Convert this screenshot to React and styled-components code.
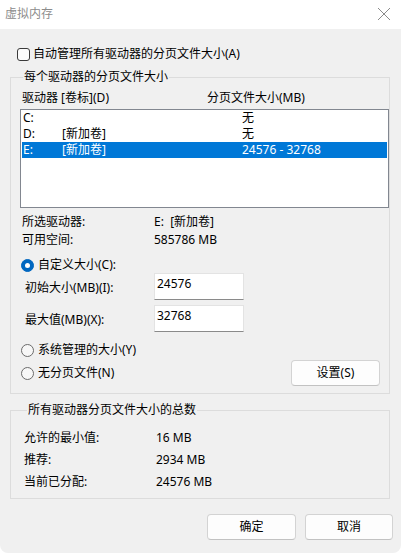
import React from 'react';
import styled, { createGlobalStyle } from 'styled-components';

const GlobalStyle = createGlobalStyle`
  html, body {
    margin: 0;
    padding: 0;
    background: #ffffff;
  }
  body {
    font-family: "Noto Sans", "Noto Sans CJK SC", sans-serif;
    font-size: 12px;
    color: #000;
  }
`;

const Window = styled.div`
  width: 401px;
  height: 553px;
  display: flex;
  flex-direction: column;
  background: #f0f0f0;
  border-radius: 0 0 8px 8px;
  overflow: hidden;
`;

const TitleBar = styled.div`
  height: 29px;
  flex: none;
  background: #ffffff;
  display: flex;
  align-items: center;
  justify-content: space-between;
  padding: 0 9px 0 5px;
  box-sizing: border-box;
`;

const Title = styled.span`
  font-size: 12px;
  line-height: 16px;
  color: #8c8c8c;
  margin-top: -1px;
`;

const CloseButton = styled.button`
  width: 16px;
  height: 16px;
  padding: 0;
  border: none;
  background: none;
  display: flex;
  align-items: center;
  justify-content: center;
  margin-top: -1px;
`;

const Body = styled.div`
  flex: 1;
  display: flex;
  flex-direction: column;
  padding: 18px 11px 0 10px;
`;

const CheckRow = styled.label`
  display: flex;
  align-items: center;
  height: 14px;
  margin-left: 7px;
  gap: 3px;
  line-height: 14px;
`;

const CheckBox = styled.span`
  width: 11px;
  height: 11px;
  border: 1px solid #3a3a3a;
  border-radius: 3px;
  background: #fbfbfb;
  flex: none;
`;

const Group = styled.fieldset`
  margin: ${p => p.$top}px 0 0 0;
  width: 380px;
  box-sizing: border-box;
  border: 1px solid #dcdcdc;
  padding: ${p => p.$pad};
  min-width: 0;
`;

const Legend = styled.legend`
  padding: 0 1px;
  margin-left: 3px;
  font-size: 12px;
  line-height: 14px;
  color: #000;
`;

const HeaderRow = styled.div`
  display: flex;
  height: 16px;
  line-height: 16px;
  padding-left: 2px;
`;

const HeaderCell = styled.span`
  width: ${p => p.$w}px;
  flex: none;
`;

const ListBox = styled.div`
  margin-top: 3px;
  height: 97px;
  border: 1px solid #828790;
  background: #ffffff;
  padding: 0 1px;
  width: 369px;
  box-sizing: border-box;
  height: 99px;
`;

const ListRow = styled.div`
  display: flex;
  height: 16px;
  line-height: 16px;
  padding-left: 1px;
  background: ${p => (p.$selected ? '#0078d7' : 'transparent')};
  color: ${p => (p.$selected ? '#ffffff' : '#000')};
`;

const ListCell = styled.span`
  width: ${p => p.$w}px;
  flex: none;
  white-space: nowrap;
`;

const InfoRow = styled.div`
  display: flex;
  height: ${p => p.$h || 18}px;
  line-height: ${p => p.$h || 18}px;
  padding-left: ${p => p.$left}px;
  margin-top: ${p => p.$top || 0}px;
`;

const InfoLabel = styled.span`
  width: ${p => p.$w}px;
  flex: none;
`;

const RadioRow = styled.label`
  display: flex;
  align-items: center;
  height: 16px;
  line-height: 16px;
  gap: 4px;
  margin-left: 1px;
  margin-top: ${p => p.$top || 0}px;
`;

const Radio = styled.span`
  width: 13px;
  height: 13px;
  border-radius: 50%;
  box-sizing: border-box;
  flex: none;
  display: flex;
  align-items: center;
  justify-content: center;
  background: ${p => (p.$checked ? '#0067c0' : '#f7f7f7')};
  border: 1px solid ${p => (p.$checked ? '#0067c0' : '#6b6b6b')};

  &::after {
    content: '';
    display: ${p => (p.$checked ? 'block' : 'none')};
    width: 5px;
    height: 5px;
    border-radius: 50%;
    background: #ffffff;
  }
`;

const FieldRow = styled.div`
  display: flex;
  align-items: center;
  height: 27px;
  padding-left: 5px;
  margin-top: ${p => p.$top || 0}px;
`;

const FieldLabel = styled.span`
  width: 129px;
  flex: none;
  line-height: 16px;
  padding-top: 3px;
`;

const Input = styled.div`
  width: 90px;
  height: 27px;
  box-sizing: border-box;
  background: #ffffff;
  border: 1px solid #e3e3e3;
  border-bottom-color: #8a8a8a;
  padding: 2px 2px 0;
  line-height: 16px;
  font-size: 12px;
`;

const BottomRow = styled.div`
  display: flex;
  align-items: center;
  justify-content: space-between;
  height: 26px;
  margin-top: 2px;
`;

const Button = styled.button`
  width: ${p => p.$w || 89}px;
  height: 26px;
  box-sizing: border-box;
  background: #fdfdfd;
  border: 1px solid #d3d3d3;
  border-bottom-color: #c2c2c2;
  border-radius: 4px;
  font-family: "Noto Sans", "Noto Sans CJK SC", sans-serif;
  font-size: 12px;
  line-height: 16px;
  color: #000;
  padding: 0;
`;

const ButtonBar = styled.div`
  display: flex;
  justify-content: flex-end;
  gap: 9px;
  margin: 15px -3px 0 0;
`;

const CloseIcon = () => (
  <svg width="14" height="14" viewBox="0 0 14 14">
    <path d="M1 1L13 13M13 1L1 13" stroke="#8a8a8a" strokeWidth="1" fill="none" />
  </svg>
);

const drives = [
  { id: 'C:', label: '', size: '无' },
  { id: 'D:', label: '[新加卷]', size: '无' },
  { id: 'E:', label: '[新加卷]', size: '24576 - 32768', selected: true },
];

const totals = [
  ['允许的最小值:', '16 MB'],
  ['推荐:', '2934 MB'],
  ['当前已分配:', '24576 MB'],
];

export default function App() {
  return (
    <>
      <GlobalStyle />
      <Window>
        <TitleBar>
          <Title>虚拟内存</Title>
          <CloseButton>
            <CloseIcon />
          </CloseButton>
        </TitleBar>
        <Body>
          <CheckRow>
            <CheckBox />
            <span>自动管理所有驱动器的分页文件大小(A)</span>
          </CheckRow>

          <Group $top={9} $pad="6px 0 7px 9px">
            <Legend>每个驱动器的分页文件大小</Legend>
            <HeaderRow>
              <HeaderCell $w={185}>驱动器 [卷标](D)</HeaderCell>
              <HeaderCell $w={150}>分页文件大小(MB)</HeaderCell>
            </HeaderRow>
            <ListBox>
              {drives.map(d => (
                <ListRow key={d.id} $selected={d.selected}>
                  <ListCell $w={39}>{d.id}</ListCell>
                  <ListCell $w={180}>{d.label}</ListCell>
                  <ListCell $w={140}>{d.size}</ListCell>
                </ListRow>
              ))}
            </ListBox>

            <InfoRow $left={2} $top={5}>
              <InfoLabel $w={132}>所选驱动器:</InfoLabel>
              <span>E:&nbsp;&nbsp;[新加卷]</span>
            </InfoRow>
            <InfoRow $left={2}>
              <InfoLabel $w={132}>可用空间:</InfoLabel>
              <span>585786 MB</span>
            </InfoRow>

            <RadioRow $top={8}>
              <Radio $checked />
              <span>自定义大小(C):</span>
            </RadioRow>
            <FieldRow>
              <FieldLabel>初始大小(MB)(I):</FieldLabel>
              <Input>24576</Input>
            </FieldRow>
            <FieldRow $top={5}>
              <FieldLabel>最大值(MB)(X):</FieldLabel>
              <Input>32768</Input>
            </FieldRow>

            <RadioRow $top={10}>
              <Radio />
              <span>系统管理的大小(Y)</span>
            </RadioRow>
            <BottomRow>
              <RadioRow>
                <Radio />
                <span>无分页文件(N)</span>
              </RadioRow>
              <Button $w={89} style={{ marginRight: 9 }}>设置(S)</Button>
            </BottomRow>
          </Group>

          <Group $top={9} $pad="10px 0 5px 13px">
            <Legend>所有驱动器分页文件大小的总数</Legend>
            {totals.map(([k, v]) => (
              <InfoRow key={k} $h={22} $left={0}>
                <InfoLabel $w={132}>{k}</InfoLabel>
                <span>{v}</span>
              </InfoRow>
            ))}
          </Group>

          <ButtonBar>
            <Button $w={89}>确定</Button>
            <Button $w={88}>取消</Button>
          </ButtonBar>
        </Body>
      </Window>
    </>
  );
}
